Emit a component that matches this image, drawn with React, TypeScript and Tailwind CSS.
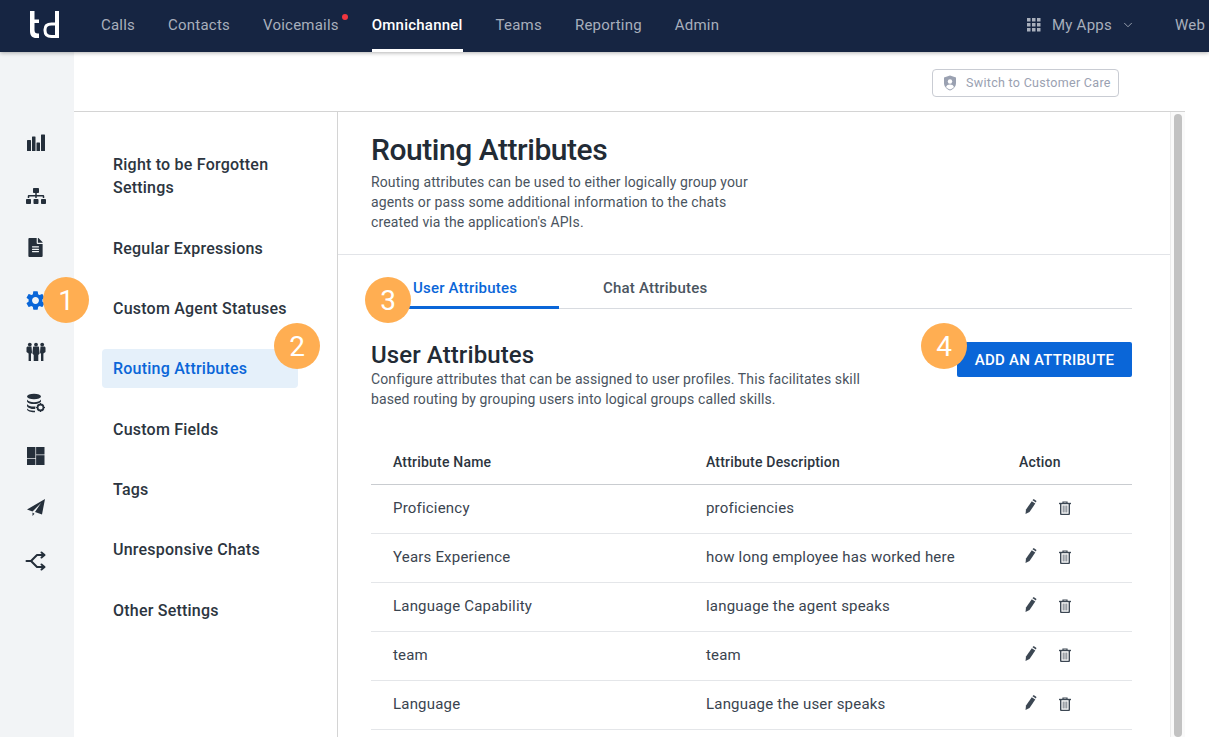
import { ChevronDown } from "lucide-react";
import { FaFileAlt, FaSitemap } from "react-icons/fa";
import { MdSettings } from "react-icons/md";

const topLinks = ["Calls", "Contacts", "Voicemails", "Omnichannel", "Teams", "Reporting", "Admin"];

const menuItems = [
  "Right to be Forgotten Settings",
  "Regular Expressions",
  "Custom Agent Statuses",
  "Routing Attributes",
  "Custom Fields",
  "Tags",
  "Unresponsive Chats",
  "Other Settings",
];

const rows = [
  ["Proficiency", "proficiencies"],
  ["Years Experience", "how long employee has worked here"],
  ["Language Capability", "language the agent speaks"],
  ["team", "team"],
  ["Language", "Language the user speaks"],
];

function BarsIcon() {
  return (
    <svg width="20" height="20" viewBox="0 0 20 20" fill="currentColor" className="mt-[2px]">
      <rect x="1" y="7" width="4" height="11" rx="0.5" />
      <rect x="6" y="3.500" width="3.500" height="14.500" rx="0.5" />
      <rect x="10.500" y="9.500" width="3.500" height="8.500" rx="0.5" />
      <rect x="15" y="1.500" width="4" height="16.500" rx="0.5" />
    </svg>
  );
}

function PeopleIcon() {
  return (
    <svg width="20" height="20" viewBox="0 0 20 20" fill="currentColor">
      <circle cx="3.800" cy="2.600" r="1.900" />
      <circle cx="10" cy="2.600" r="1.900" />
      <circle cx="16.200" cy="2.600" r="1.900" />
      <path d="M.5 6c0-1 .7-1.500 1.500-1.500h3.500L6 10.500 5 12v7H2.600v-7.500L.5 10z" />
      <path d="M7 5.500c0-.6.4-1 1-1h4c.6 0 1 .4 1 1l.6 6-1.300 1.500V19H7.700v-6L6.400 11.500z" />
      <path d="M19.500 6c0-1-.7-1.500-1.500-1.500h-3.500L14 10.500l1 1.500v7h2.400v-7.500l2.100-1.500z" />
    </svg>
  );
}

function DatabaseIcon() {
  return (
    <svg width="20" height="20" viewBox="0 0 20 20" fill="currentColor" className="mb-[2px]">
      <ellipse cx="8" cy="3.500" rx="7" ry="2.800" />
      <path d="M1 6.500c1 2 4 2.700 7 2.700s6-.7 7-2.700v2c-.6 1-1.700 1.500-3 2-1.500.4-2.500.6-4 .6-3 0-6-.8-7-2.600z" />
      <path d="M1 11c1 1.800 4 2.600 7 2.600h1.500l-.3 2.400H8c-3 0-6-.9-7-2.800z" />
      <path d="M1 15.500c1 1.500 4 2.200 7 2.200h1v1.500H8c-3 0-7-1-7-3z" />
      <circle cx="14.500" cy="14.500" r="3" fill="none" stroke="currentColor" strokeWidth="1.800" />
      <path d="M14 10h1v1.500h-1zM14 17.500h1V19h-1zM10 14h1.500v1H10zM17.500 14H19v1h-1.500z" />
    </svg>
  );
}

function DashboardIcon() {
  return (
    <svg width="18" height="18" viewBox="0 0 18 18" fill="currentColor">
      <rect x="0" y="0" width="8.400" height="11" />
      <rect x="0" y="11.700" width="8.400" height="6.300" />
      <rect x="9.100" y="0" width="8.400" height="7.500" />
      <rect x="9.100" y="8.200" width="8.400" height="9.800" />
    </svg>
  );
}

function PlaneIcon() {
  return (
    <svg width="18" height="17" viewBox="0 0 18 17" fill="currentColor" className="mb-[2px]">
      <path d="M18 0L0 10.500l5.500 2L14 4l-6 9 7 2.500z" />
      <path d="M5.500 13.500V17l2-2.200z" />
    </svg>
  );
}

function SplitIcon() {
  return (
    <svg width="22" height="22" viewBox="0 0 22 22" fill="none" stroke="currentColor" strokeWidth="2" strokeLinecap="round" strokeLinejoin="round">
      <path d="M1.500 11h4.500l6-6h7" />
      <path d="M6 11l6 6h7" />
      <path d="M16.500 2.500l3 2.500-3 2.500" />
      <path d="M16.500 14.500l3 2.500-3 2.500" />
    </svg>
  );
}

function PencilIcon() {
  return (
    <svg width="12" height="15" viewBox="0 0 12 15" fill="currentColor" className="-mt-[4px]">
      <path d="M.5 15L1 10.500 6.800 2.200l3.500 2.400L4.500 13z" />
      <path d="M7.500 1.200l.7-.9q.3-.3.8 0l2.200 1.500q.4.3.1.8l-.4 1z" />
    </svg>
  );
}

function TrashIcon() {
  return (
    <svg width="12" height="14" viewBox="0 0 12 14" fill="none" stroke="currentColor" className="-mt-px">
      <path d="M0 2.500h12" strokeWidth="1.400" />
      <path d="M4 2V1h4v1" strokeWidth="1.200" />
      <path d="M1.700 3v9.500c0 .6.400 1 1 1h6.600c.6 0 1-.4 1-1V3" strokeWidth="1.400" />
      <path d="M4.200 4.500v7M6 4.500v7M7.800 4.500v7" strokeWidth="1" opacity="0.75" />
    </svg>
  );
}

function ShieldIcon() {
  return (
    <svg width="14" height="16" viewBox="0 0 14 16" className="text-[#9aa1b1]" fill="currentColor">
      <path d="M7 0.500l6 2v5.500c0 3.500-2.500 6-6 7.500-3.500-1.500-6-4-6-7.500V2.500z" />
      <circle cx="7" cy="6.500" r="2.200" fill="#fff" />
      <path d="M3 12c.6-1.700 2-2.500 4-2.500s3.400.8 4 2.500c-1 1.200-2.400 2-4 2.500-1.600-.5-3-1.300-4-2.500z" fill="#fff" />
    </svg>
  );
}

function RailIcon({ children }: { children: React.ReactNode }) {
  return <div className="flex h-[20px] items-center justify-center">{children}</div>;
}

function Badge({ n, className }: { n: number; className: string }) {
  return (
    <div className={`absolute flex h-[46px] w-[46px] items-center justify-center rounded-full bg-[#ffae52] pt-px text-[28px] text-white ${className}`}>
      {n}
    </div>
  );
}

export default function App() {
  return (
    <div className="relative h-[737px] w-[1209px] overflow-hidden bg-white font-['Roboto',sans-serif] text-[#2c3540]">
      <header className="relative z-10 flex h-[52px] items-stretch bg-[#162542] shadow-[0_1px_4px_rgba(0,0,0,0.3)]">
        <div className="flex w-[101px] items-start pl-[30px] pt-[11px]">
          <svg width="29" height="27" viewBox="0 0 29 27" fill="#fff">
            <path d="M0 0h4.500v8.500H9V12H4.500v7c0 2.500 1 3.500 3.500 3.500h1V27H6.500C2 27 0 24.500 0 20z" />
            <path d="M25 13h-3.500c-4 0-6.500 2-6.500 5.500v1c0 4 2.500 6 6.500 6H25" fill="none" stroke="#fff" strokeWidth="3" />
            <rect x="25" y="0" width="4" height="27" />
          </svg>
        </div>
        <nav className="flex gap-[33px] text-[15px] tracking-[0.22px]">
          {topLinks.map((link) => (
            <div
              key={link}
              className={`relative flex items-center pb-[2px] ${link === "Omnichannel" ? "font-medium text-white after:absolute after:bottom-0 after:left-0 after:h-[3px] after:w-full after:bg-white" : "text-[#a8afbc]"}`}
            >
              {link}
              {link === "Voicemails" ? <span className="absolute right-[-9px] top-[14px] h-[6px] w-[6px] rounded-full bg-[#f0363f]" /> : null}
            </div>
          ))}
        </nav>
        <div className="ml-auto flex items-center whitespace-nowrap pb-[2px] text-[15px] tracking-[0.25px] text-[#a8afbc]">
          <svg width="14" height="14" viewBox="0 0 14 14" fill="currentColor" className="mr-[11px]">
            {[0, 5, 10].flatMap((y) =>
              [0, 5, 10].map((x) => <rect key={`${x}-${y}`} x={x} y={y} width="3.500" height="3.500" />)
            )}
          </svg>
          <span>My Apps</span>
          <ChevronDown strokeWidth={1.5} className="ml-[9px] h-[14px] w-[14px]" />
          <span className="ml-[40px] w-[34px] overflow-hidden">Web</span>
        </div>
      </header>

      <div className="flex h-[685px]">
        <aside className="flex w-[74px] shrink-0 flex-col gap-[32.400px] bg-[#f2f4f6] pr-[3px] pt-[80px] text-[#252f3b]">
          <RailIcon><BarsIcon /></RailIcon>
          <RailIcon><FaSitemap size={20} className="mt-[3px]" /></RailIcon>
          <RailIcon><FaFileAlt size={19} className="mt-[2px]" /></RailIcon>
          <RailIcon><MdSettings size={23} className="mt-[2px] text-[#0a66d8]" /></RailIcon>
          <RailIcon><PeopleIcon /></RailIcon>
          <RailIcon><DatabaseIcon /></RailIcon>
          <RailIcon><DashboardIcon /></RailIcon>
          <RailIcon><PlaneIcon /></RailIcon>
          <RailIcon><SplitIcon /></RailIcon>
        </aside>

        <div className="flex min-w-0 flex-1 flex-col pr-6">
          <div className="flex h-[60px] shrink-0 items-start justify-end border-b border-[#d4d4d4] pr-[66px] pt-[17px]">
            <button className="flex h-[28px] w-[187px] items-center gap-[9px] whitespace-nowrap rounded-[4px] border border-[#c9ccd3] pl-[10px] text-[12.500px] tracking-[0.3px] text-[#9aa1b1]">
              <ShieldIcon />
              Switch to Customer Care
            </button>
          </div>

          <div className="flex min-h-0 flex-1">
            <nav className="flex w-[264px] shrink-0 flex-col gap-[21.350px] border-r border-[#d4d4d4] pl-7 pr-[39px] pt-[33.400px] text-[16px] font-medium leading-[23px] tracking-[0.22px]">
              {menuItems.map((item) => (
                <div
                  key={item}
                  className={`rounded-[4px] px-[11px] py-2 ${item === "Routing Attributes" ? "bg-[#e5f0fa] text-[#0a66d8]" : ""}`}
                >
                  {item}
                </div>
              ))}
            </nav>

            <main className="min-w-0 flex-1">
              <section className="h-[143px] border-b border-[#e2e4e8] pl-[33px] pt-[20px]">
                <h1 className="text-[30px] font-medium leading-[36px] tracking-[-0.45px] text-[#222b35]">Routing Attributes</h1>
                <p className="mt-[4px] w-[385px] text-[14px] leading-[20px] tracking-[0.13px] text-[#4a5460]">
                  Routing attributes can be used to either logically group your agents or pass some additional information to the chats created via the application's APIs.
                </p>
              </section>

              <section className="pl-[33px] pr-[38px]">
                <div className="flex h-[54px] border-b border-[#d8dbe0] text-[15px] font-medium tracking-[0.2px]">
                  <div className="relative flex w-[188px] items-center pl-[42px] pt-[13px] text-[#0a66d8] after:absolute after:bottom-[-1px] after:left-0 after:h-[3px] after:w-full after:bg-[#0a66d8]">
                    User Attributes
                  </div>
                  <div className="flex items-center pl-[44px] pt-[13px] text-[#4a5460]">Chat Attributes</div>
                </div>

                <div className="mt-[33px] flex items-start justify-between">
                  <div className="-mt-px">
                    <h2 className="text-[24px] font-medium leading-[28px] tracking-[0.1px] text-[#222b35]">User Attributes</h2>
                    <p className="w-[510px] text-[14px] leading-[20px] tracking-[0.11px] text-[#4a5460]">
                      Configure attributes that can be assigned to user profiles. This facilitates skill based routing by grouping users into logical groups called skills.
                    </p>
                  </div>
                  <button className="h-[35px] w-[175px] rounded-[2px] bg-[#0a66d8] pt-px text-[15px] font-medium tracking-[0.25px] text-white">
                    ADD AN ATTRIBUTE
                  </button>
                </div>

                <table className="mt-[30px] w-full table-fixed border-collapse text-left text-[15px] tracking-[0.2px]">
                  <thead>
                    <tr className="h-[45px] border-b border-[#c9ccd0] text-[14px] font-medium">
                      <th className="w-[313px] pl-[22px] pt-[2px] font-medium">Attribute Name</th>
                      <th className="w-[313px] pl-[22px] pt-[2px] font-medium">Attribute Description</th>
                      <th className="pl-[22px] pt-[2px] font-medium">Action</th>
                    </tr>
                  </thead>
                  <tbody>
                    {rows.map(([name, description]) => (
                      <tr key={name} className="h-[49px] border-b border-[#e4e6e9] text-[#3a444f]">
                        <td className="pl-[22px]">{name}</td>
                        <td className="whitespace-nowrap pl-[22px]">{description}</td>
                        <td className="pl-[22px]">
                          <div className="ml-[6px] flex items-center gap-[22px] text-[#3c4753]">
                            <PencilIcon />
                            <TrashIcon />
                          </div>
                        </td>
                      </tr>
                    ))}
                  </tbody>
                </table>
              </section>
            </main>

            <div className="w-[15px] shrink-0 border-l border-[#ececec] bg-[#fafafa] px-[3px] pt-[2px]">
              <div className="h-full rounded-full bg-[#c2c2c2]" />
            </div>
          </div>
        </div>
      </div>

      <Badge n={1} className="left-[43px] top-[277px]" />
      <Badge n={2} className="left-[274px] top-[323px]" />
      <Badge n={3} className="left-[365px] top-[277px]" />
      <Badge n={4} className="left-[921px] top-[323px]" />
    </div>
  );
}
